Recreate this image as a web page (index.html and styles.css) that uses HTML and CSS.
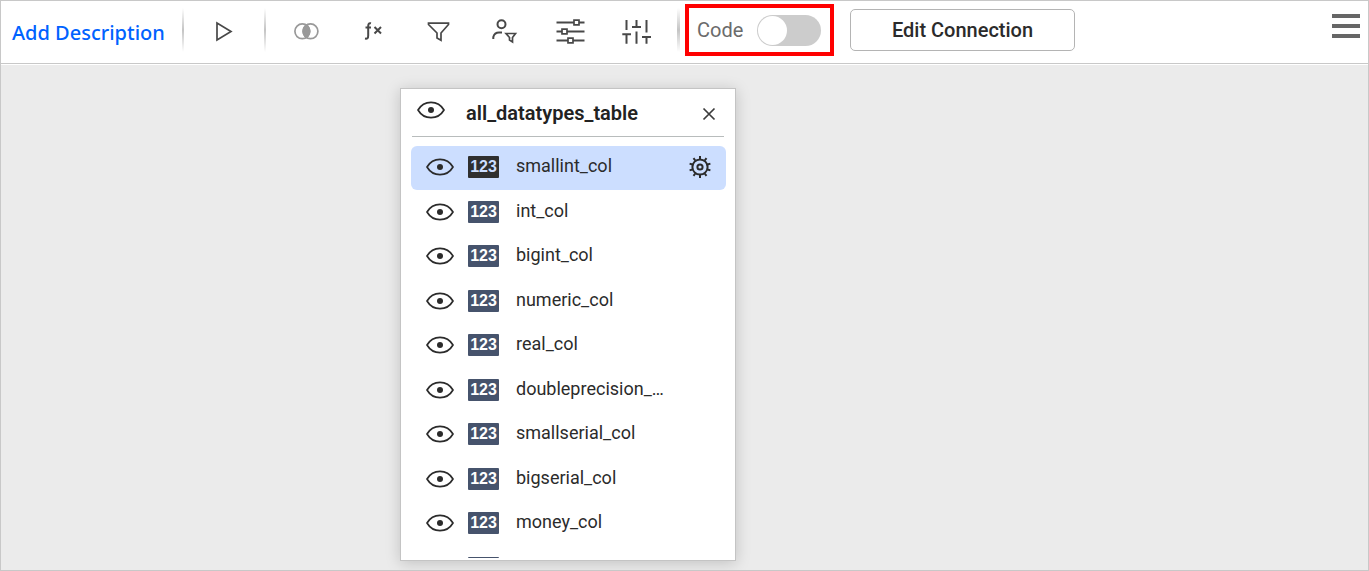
FILE: index.html
```
<!DOCTYPE html>
<html lang="en">
<head>
<meta charset="utf-8">
<title>Data source designer</title>
<link rel="stylesheet" href="styles.css">
</head>
<body>
<svg class="defs" aria-hidden="true">
  <symbol id="eye" viewBox="0 0 28 18"><path d="M1 9C7-1.2 21-1.2 27 9C21 19.2 7 19.2 1 9Z" fill="none" stroke="#2b2b2b" stroke-width="1.7" stroke-linejoin="round"/><circle cx="14" cy="9" r="3" fill="#2b2b2b"/></symbol>
</svg>
<header class="toolbar">
  <a class="describe" href="#">Add Description</a>
  <span class="sep"></span>
  <button class="tool run" aria-label="Run"><svg viewBox="0 0 32 32"><path d="M9 9V26L23 17.500Z"/></svg></button>
  <span class="sep"></span>
  <div class="tools">
    <button class="tool muted" aria-label="Join"><svg viewBox="0 0 32 32"><circle cx="12.300" cy="17.300" r="7.400"/><circle cx="20.500" cy="17.300" r="7.400"/><path class="solid" d="M16.400 11.200A7.400 7.400 0 0 1 16.400 23.400A7.400 7.400 0 0 1 16.400 11.200Z"/></svg></button>
    <button class="tool" aria-label="Expression"><svg viewBox="0 0 32 32"><path class="bold" d="M15 9.300C12.500 8.700 12.200 10.500 12.200 12.500V21.500C12.200 24.500 11.200 25 9 24.600M9.500 13.500H15M18.500 13L25 19.500M25 13L18.500 19.500"/></svg></button>
    <button class="tool" aria-label="Filter"><svg viewBox="0 0 32 32"><path d="M6.500 9.200H26.500V10.500L19 19V26.200L15 24V19L6.500 10.500Z"/></svg></button>
    <button class="tool" aria-label="User filter"><svg viewBox="0 0 32 32"><circle class="bold" cx="13.500" cy="10.300" r="4"/><path class="bold" d="M5.300 25V23Q6.500 18.500 11 18.500H14"/><path d="M18 19.500H27.500L24.500 23.500V28L21.500 26V23.500Z"/></svg></button>
    <button class="tool" aria-label="Parameters"><svg viewBox="0 0 32 32"><path class="bold" d="M2.500 8.500H20M25 8.500H30.500M2.500 17.500H8M13 17.500H30.500M2.500 26.500H14M19 26.500H30.500"/><path d="M20 6.200H25V10.800H20ZM8 15.200H13V19.800H8ZM14 24.200H19V28.800H14Z"/></svg></button>
    <button class="tool" aria-label="Settings"><svg viewBox="0 0 32 32"><path class="bold" d="M6.500 6V16M2.300 20.300H11M6.500 20.300V29.700M16.500 6V13M12 13H21M16.500 17.500V29.700M26.500 6V18.500M22 23H31M26.500 23V29.700"/></svg></button>
  </div>
  <span class="sep wide"></span>
  <div class="code-box">
    <label for="code">Code</label>
    <input id="code" class="switch" type="checkbox" role="switch">
  </div>
  <button class="edit">Edit Connection</button>
  <button class="menu" aria-label="Menu"><span></span><span></span><span></span></button>
</header>
<main class="canvas">
  <section class="node">
    <div class="node-head">
      <svg class="eye"><use href="#eye"/></svg>
      <h2>all_datatypes_table</h2>
      <button class="close" aria-label="Close"><svg viewBox="0 0 14 14"><path d="M1.500 1.500L12.500 12.500M12.500 1.500L1.500 12.500"/></svg></button>
    </div>
    <ul class="columns">
      <li class="selected"><svg class="eye"><use href="#eye"/></svg><span class="type">123</span><span class="name">smallint_col</span>
        <button class="gear" aria-label="Column settings"><svg viewBox="0 0 24 24"><circle cx="12" cy="12" r="7.600"/><circle cx="12" cy="12" r="2.600"/><path d="M12 4V1M16.700 5.500L18.500 3.100M19.600 9.500L22.400 8.600M19.600 14.500L22.400 15.400M16.700 18.500L18.500 20.900M12 20V23M7.300 18.500L5.500 20.900M4.400 14.500L1.600 15.400M4.400 9.500L1.600 8.600M7.300 5.500L5.500 3.100"/></svg></button></li>
      <li><svg class="eye"><use href="#eye"/></svg><span class="type">123</span><span class="name">int_col</span></li>
      <li><svg class="eye"><use href="#eye"/></svg><span class="type">123</span><span class="name">bigint_col</span></li>
      <li><svg class="eye"><use href="#eye"/></svg><span class="type">123</span><span class="name">numeric_col</span></li>
      <li><svg class="eye"><use href="#eye"/></svg><span class="type">123</span><span class="name">real_col</span></li>
      <li><svg class="eye"><use href="#eye"/></svg><span class="type">123</span><span class="name">doubleprecision_…</span></li>
      <li><svg class="eye"><use href="#eye"/></svg><span class="type">123</span><span class="name">smallserial_col</span></li>
      <li><svg class="eye"><use href="#eye"/></svg><span class="type">123</span><span class="name">bigserial_col</span></li>
      <li><svg class="eye"><use href="#eye"/></svg><span class="type">123</span><span class="name">money_col</span></li>
      <li><svg class="eye"><use href="#eye"/></svg><span class="type"></span></li>
    </ul>
  </section>
</main>
</body>
</html>
```

FILE: styles.css
```
* { box-sizing: border-box; }

body {
  margin: 0;
  height: 100vh;
  display: flex;
  flex-direction: column;
  border: 1px solid #c8c8c8;
  background: #fff;
  color: #2b2b2b;
  font-family: Roboto, sans-serif;
}

button {
  padding: 0;
  border: 0;
  background: none;
  color: inherit;
  font: inherit;
}

.defs { position: absolute; width: 0; height: 0; }

.toolbar {
  display: flex;
  flex: none;
  align-items: center;
  height: 63px;
  padding: 0 8px 4px 11px;
  border-bottom: 1px solid #c8c8c8;
}

.describe {
  flex: none;
  width: 170px;
  padding-top: 5px;
  color: #0062ff;
  font: 500 20px/28px "Noto Sans", sans-serif;
  text-decoration: none;
  white-space: nowrap;
}

.sep {
  flex: none;
  width: 2px;
  height: 44px;
  background: linear-gradient(#fff, #c4c4c4 50%, #fff);
}
.sep.wide { width: 3px; }

.tools { display: flex; margin: 0 8px 0 7px; }
.tool { display: grid; place-items: center; width: 66px; height: 40px; flex: none; }
.tool.run { width: 80px; }
.tool svg {
  width: 32px;
  height: 32px;
  fill: none;
  stroke: #484848;
  stroke-width: 1.7;
}
.tool .bold { stroke-width: 2; }
.tool.muted svg { stroke: #999; }
.tool .solid { fill: #999; }

.code-box {
  display: flex;
  flex: none;
  align-items: center;
  justify-content: space-between;
  width: 149px;
  height: 52px;
  margin-left: 5px;
  padding: 0 9px 0 8px;
  border: 4px solid #f00;
  color: #6b6b6b;
  font-size: 20px;
}

.switch {
  appearance: none;
  display: flex;
  width: 64px;
  height: 31px;
  margin: 0;
  padding: 1px;
  border-radius: 16px;
  background: #ccc;
}
.switch::before {
  content: "";
  width: 29px;
  height: 29px;
  border-radius: 50%;
  background: #fff;
}
.switch:checked { justify-content: flex-end; background: #0062ff; }

.edit {
  flex: none;
  width: 225px;
  height: 42px;
  margin-left: 16px;
  border: 1px solid #b4b4b4;
  border-radius: 5px;
  font-size: 20px;
  font-weight: 500;
}

.menu {
  display: grid;
  gap: 6px;
  width: 28px;
  margin: 0 0 8px auto;
}
.menu span { height: 4px; background: #666; }

.canvas {
  position: relative;
  flex: 1;
  min-height: 0;
  margin-top: 1px;
  background: #ebebeb;
}

.node {
  position: absolute;
  top: 23px;
  bottom: 9px;
  left: 399px;
  display: flex;
  flex-direction: column;
  width: 336px;
  padding: 0 9px 2px 10px;
  border: 1px solid #c4c4c4;
  background: #fff;
  box-shadow: 0 2px 14px rgba(0, 0, 0, .18);
}

.eye { flex: none; width: 28px; height: 18px; }

.node-head {
  display: flex;
  flex: none;
  align-items: center;
  height: 48px;
  margin: 0 2px 9px 1px;
  padding: 0 8px 0 5px;
  border-bottom: 1px solid #b8bcbc;
}
.node-head .eye { margin-bottom: 5px; }
.node-head h2 {
  flex: 1;
  margin: 0 0 0 21px;
  color: #222;
  font-size: 20px;
  font-weight: 600;
}
.close { width: 14px; height: 14px; margin-top: 2px; }
.close svg, .gear svg { display: block; fill: none; stroke: #3c3c3c; stroke-width: 1.7; }

.columns {
  flex: 1;
  min-height: 0;
  margin: 0;
  padding: 0;
  overflow: hidden;
  list-style: none;
}
.columns li {
  display: flex;
  align-items: center;
  height: 44px;
  padding: 0 14px 2px 15px;
  border-radius: 6px;
  font-size: 18px;
}
.columns li:nth-child(odd) { margin-bottom: 1px; }
.columns .selected { background: #ccdeff; }
.name { flex: 1; margin-left: 17px; padding-bottom: 3px; }
.type {
  flex: none;
  width: 31px;
  height: 22px;
  margin-left: 14px;
  border-radius: 1px;
  background: #46536c;
  color: #fff;
  font: bold 16px/22px "Liberation Sans", Arial, sans-serif;
  text-align: center;
}
.selected .type { background: #2f2f2f; color: #ccdeff; }
.gear { width: 24px; height: 24px; }
.gear svg { stroke: #2b2b2b; stroke-width: 2; }
```
